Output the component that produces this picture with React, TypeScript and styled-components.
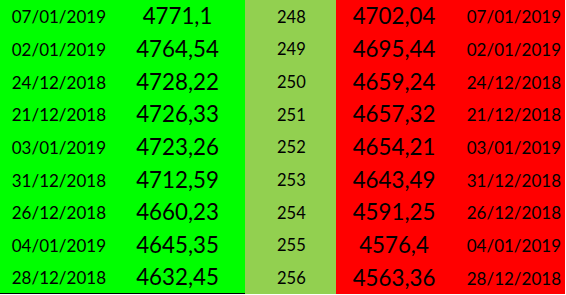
import styled, { createGlobalStyle } from 'styled-components'

const GlobalStyle = createGlobalStyle`
  html, body {
    margin: 0;
    padding: 0;
    background: #ffffff;
  }
  body {
    font-family: Lato, 'Liberation Sans', sans-serif;
    color: #000000;
  }
`

type Tone = 'up' | 'rank' | 'down'
type Align = 'left' | 'center' | 'right'

const TONES: Record<Tone, string> = {
  up: '#00ff00',
  rank: '#92d050',
  down: '#ff0000',
}

const ROWS = [
  { upDate: '07/01/2019', up: '4771,1', rank: 248, down: '4702,04', downDate: '07/01/2019' },
  { upDate: '02/01/2019', up: '4764,54', rank: 249, down: '4695,44', downDate: '02/01/2019' },
  { upDate: '24/12/2018', up: '4728,22', rank: 250, down: '4659,24', downDate: '24/12/2018' },
  { upDate: '21/12/2018', up: '4726,33', rank: 251, down: '4657,32', downDate: '21/12/2018' },
  { upDate: '03/01/2019', up: '4723,26', rank: 252, down: '4654,21', downDate: '03/01/2019' },
  { upDate: '31/12/2018', up: '4712,59', rank: 253, down: '4643,49', downDate: '31/12/2018' },
  { upDate: '26/12/2018', up: '4660,23', rank: 254, down: '4591,25', downDate: '26/12/2018' },
  { upDate: '04/01/2019', up: '4645,35', rank: 255, down: '4576,4', downDate: '04/01/2019' },
  { upDate: '28/12/2018', up: '4632,45', rank: 256, down: '4563,36', downDate: '28/12/2018' },
]

const Sheet = styled.div`
  display: grid;
  grid-template-columns: 110px 135px 91px 116px 113px;
  grid-auto-rows: 32.7px;
  width: 565px;
`

const Cell = styled.div<{ $tone: Tone; $align: Align; $size: number; $last?: boolean }>`
  display: flex;
  align-items: center;
  justify-content: ${(p) =>
    p.$align === 'left' ? 'flex-start' : p.$align === 'right' ? 'flex-end' : 'center'};
  padding: ${(p) => (p.$align === 'right' ? '1px 4px 0 0' : p.$align === 'left' ? '1px 0 0 32px' : '0')};
  background: ${(p) => TONES[p.$tone]};
  font-size: ${(p) => p.$size}px;
  line-height: 1;
  white-space: nowrap;
  box-sizing: border-box;
  border-bottom: ${(p) => (p.$last && p.$tone === 'up' ? '1px solid #000' : 'none')};
`

export default function App() {
  return (
    <>
      <GlobalStyle />
      <Sheet>
        {ROWS.map((row, i) => {
          const last = i === ROWS.length - 1
          return [
            <Cell key={`a${i}`} $tone="up" $align="right" $size={17} $last={last}>
              {row.upDate}
            </Cell>,
            <Cell key={`b${i}`} $tone="up" $align="center" $size={22.3} $last={last}>
              {row.up}
            </Cell>,
            <Cell key={`c${i}`} $tone="rank" $align="left" $size={16.5} $last={last}>
              {row.rank}
            </Cell>,
            <Cell key={`d${i}`} $tone="down" $align="center" $size={22.3} $last={last}>
              {row.down}
            </Cell>,
            <Cell key={`e${i}`} $tone="down" $align="right" $size={17} $last={last}>
              {row.downDate}
            </Cell>,
          ]
        })}
      </Sheet>
    </>
  )
}
